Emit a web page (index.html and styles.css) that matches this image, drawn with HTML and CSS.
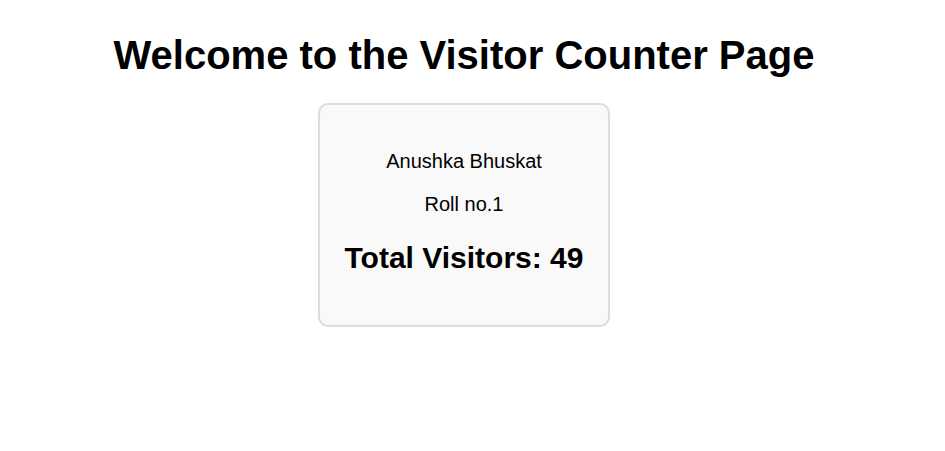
FILE: index.html
```html
<!DOCTYPE html>
<html lang="en">
<head>
<meta charset="utf-8">
<title>Visitor Counter</title>
<link rel="stylesheet" href="styles.css">
</head>
<body>
<main class="page">
  <h1 class="title">Welcome to the Visitor Counter Page</h1>
  <section class="card">
    <p class="line">Anushka Bhuskat</p>
    <p class="line roll">Roll no.1</p>
    <h2 class="total">Total Visitors: 49</h2>
  </section>
</main>
</body>
</html>
```
FILE: styles.css
```css
html, body {
  margin: 0;
  padding: 0;
  background: #ffffff;
}
body {
  font-family: "Liberation Sans", Arial, sans-serif;
  color: #000;
}
.page {
  width: 928px;
  display: flex;
  flex-direction: column;
  align-items: center;
  text-align: center;
}
.title {
  margin: 32px 0 25px;
  font-size: 40px;
  line-height: 46px;
  font-weight: bold;
}
.card {
  display: flex;
  flex-direction: column;
  align-items: center;
  padding: 45px 25px 50px;
  border: 2px solid #dddddd;
  border-radius: 10px;
  background: #f9f9f9;
}
.line {
  margin: 0;
  font-size: 20px;
  line-height: 23px;
}
.roll {
  margin-top: 20px;
}
.total {
  margin: 25px 0 0;
  font-size: 30px;
  line-height: 34px;
  font-weight: bold;
}
```
